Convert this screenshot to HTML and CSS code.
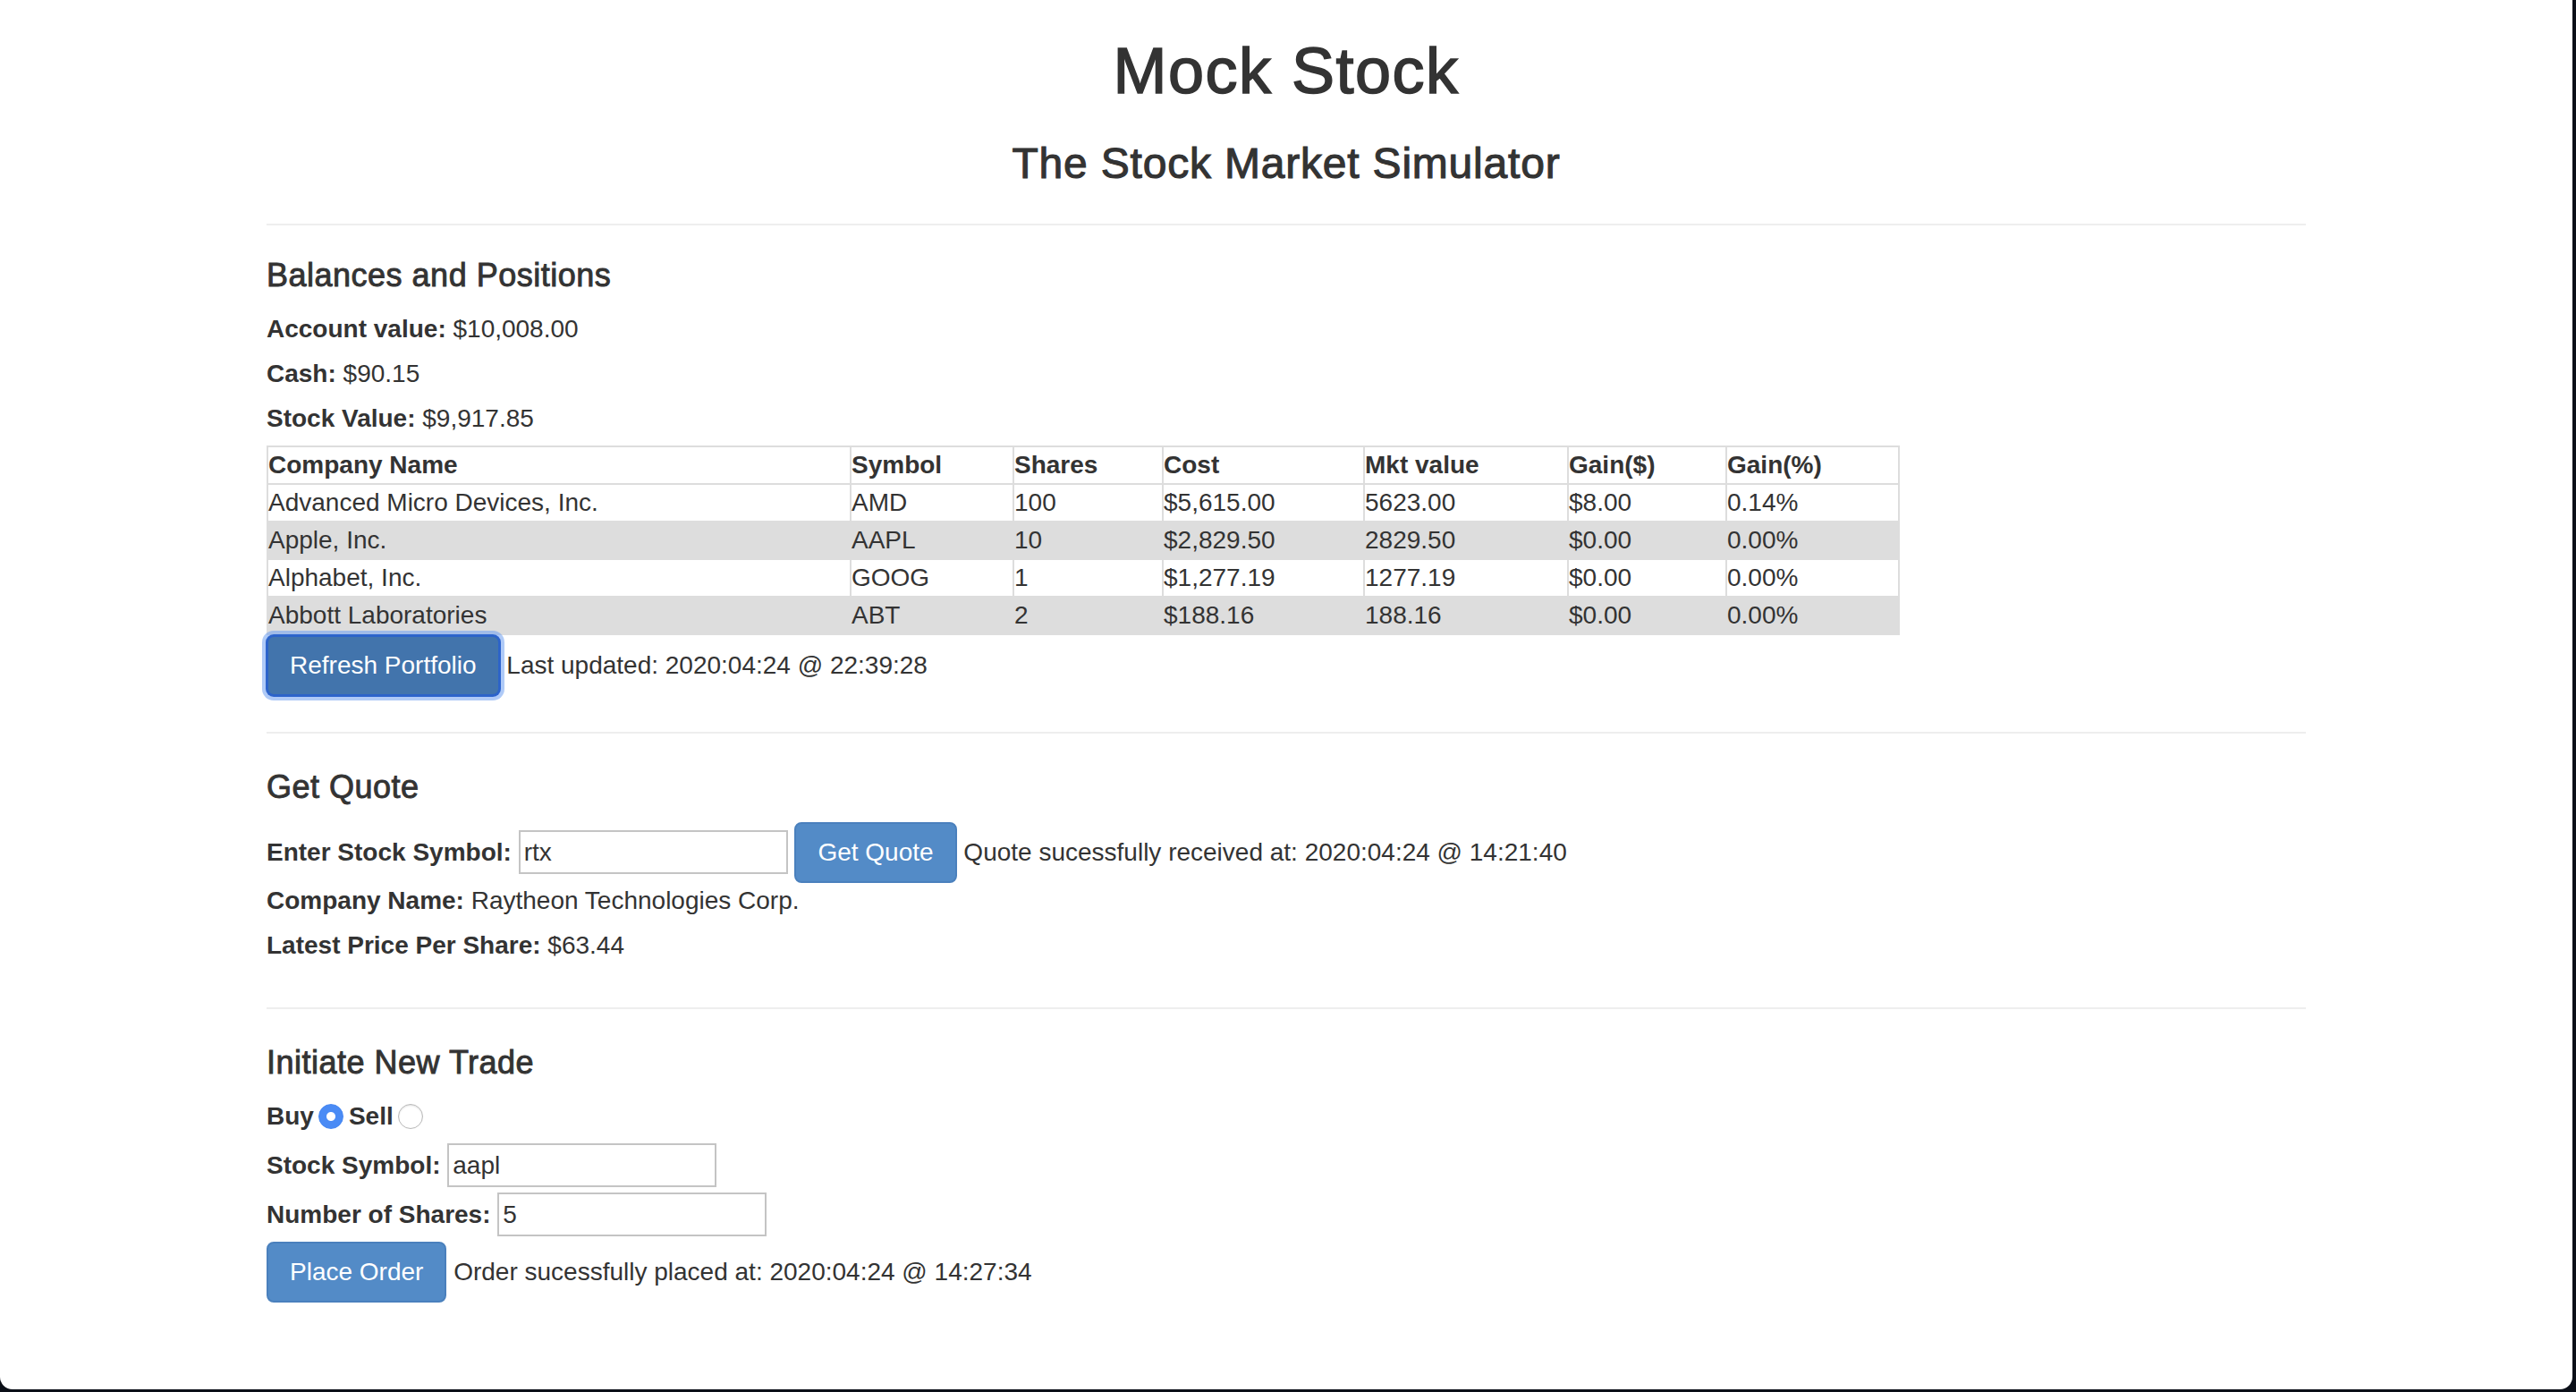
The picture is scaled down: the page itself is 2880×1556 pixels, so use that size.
FILE: index.html
```html
<!DOCTYPE html>
<html lang="en">
<head>
<meta charset="utf-8">
<title>Mock Stock</title>
<link rel="stylesheet" href="styles.css">
</head>
<body>
<div class="window">
  <div class="container">
    <h1 class="title">Mock Stock</h1>
    <h3 class="subtitle">The Stock Market Simulator</h3>
    <hr class="rule rule-top">

    <section class="section">
      <h4 class="section-title">Balances and Positions</h4>
      <div class="field"><label class="label">Account value:</label> $10,008.00</div>
      <div class="field"><label class="label">Cash:</label> $90.15</div>
      <div class="field"><label class="label">Stock Value:</label> $9,917.85</div>
      <table class="positions">
        <thead>
          <tr>
            <th class="c-name">Company Name</th>
            <th class="c-sym">Symbol</th>
            <th class="c-shares">Shares</th>
            <th class="c-cost">Cost</th>
            <th class="c-mkt">Mkt value</th>
            <th class="c-gain">Gain($)</th>
            <th class="c-pct">Gain(%)</th>
          </tr>
        </thead>
        <tbody>
          <tr><td>Advanced Micro Devices, Inc.</td><td>AMD</td><td>100</td><td>$5,615.00</td><td>5623.00</td><td>$8.00</td><td>0.14%</td></tr>
          <tr><td>Apple, Inc.</td><td>AAPL</td><td>10</td><td>$2,829.50</td><td>2829.50</td><td>$0.00</td><td>0.00%</td></tr>
          <tr><td>Alphabet, Inc.</td><td>GOOG</td><td>1</td><td>$1,277.19</td><td>1277.19</td><td>$0.00</td><td>0.00%</td></tr>
          <tr><td>Abbott Laboratories</td><td>ABT</td><td>2</td><td>$188.16</td><td>188.16</td><td>$0.00</td><td>0.00%</td></tr>
        </tbody>
      </table>
      <div class="action-line"><button class="btn btn-focused" type="button">Refresh Portfolio</button> Last updated: 2020:04:24 @ 22:39:28</div>
    </section>

    <hr class="rule">

    <section class="section">
      <h4 class="section-title">Get Quote</h4>
      <div class="action-line"><label class="label">Enter Stock Symbol:</label> <input class="text-input" type="text" value="rtx"> <button class="btn" type="button">Get Quote</button> Quote sucessfully received at: 2020:04:24 @ 14:21:40</div>
      <div class="field"><label class="label">Company Name:</label> Raytheon Technologies Corp.</div>
      <div class="field"><label class="label">Latest Price Per Share:</label> $63.44</div>
    </section>

    <hr class="rule rule-last">

    <section class="section">
      <h4 class="section-title">Initiate New Trade</h4>
      <div class="field"><label class="label">Buy</label><input class="radio" type="radio" name="side" checked><label class="label">Sell</label><input class="radio" type="radio" name="side"></div>
      <div class="field"><label class="label">Stock Symbol:</label> <input class="text-input" type="text" value="aapl"></div>
      <div class="field"><label class="label">Number of Shares:</label> <input class="text-input" type="text" value="5"></div>
      <div class="action-line"><button class="btn" type="button">Place Order</button> Order sucessfully placed at: 2020:04:24 @ 14:27:34</div>
    </section>
  </div>
</div>
</body>
</html>
```

FILE: styles.css
```css
* {
  box-sizing: border-box;
}

html {
  background: #0b0f18;
}

body {
  margin: 0;
  font-family: "Liberation Sans", Arial, Helvetica, sans-serif;
  font-size: 28px;
  line-height: 40px;
  color: #333333;
}

.window {
  width: 2876px;
  height: 1553px;
  background: #ffffff;
  border-radius: 0 0 14px 14px;
  overflow: hidden;
}

.container {
  width: 2340px;
  margin: 0 auto;
  padding: 0 30px;
}

.title {
  margin: 40px 0 20px;
  font-size: 72px;
  line-height: 1.1;
  font-weight: 500;
  text-align: center;
  letter-spacing: 1.5px;
  -webkit-text-stroke: 1.6px #333333;
}

.subtitle {
  margin: 38px 0 20px;
  font-size: 48px;
  line-height: 1.1;
  font-weight: 500;
  text-align: center;
  letter-spacing: 0.8px;
  -webkit-text-stroke: 1.1px #333333;
}

.rule {
  height: 0;
  margin: 40px 0 40px;
  border: 0;
  border-top: 2px solid #eeeeee;
}

.rule-top {
  margin-bottom: 36px;
}

.rule-last {
  margin-top: 39px;
}

.section-title {
  margin: 0 0 20px;
  font-size: 36px;
  line-height: 1.1;
  font-weight: 500;
  letter-spacing: 0.5px;
  -webkit-text-stroke: 0.9px #333333;
}

.label {
  display: inline-block;
  margin-bottom: 10px;
  font-weight: 700;
}

.positions {
  width: 1824px;
  border-collapse: collapse;
  border-spacing: 0;
  table-layout: fixed;
  border: 2px solid #dddddd;
}

.positions th,
.positions td {
  padding: 0;
  border: 2px solid #dddddd;
  text-align: left;
  line-height: 40px;
  white-space: nowrap;
}

.positions th {
  font-weight: 700;
}

.positions tbody tr:nth-child(even) {
  background: #dddddd;
}

.c-name { width: 652px; }
.c-sym { width: 182px; }
.c-shares { width: 167px; }
.c-cost { width: 225px; }
.c-mkt { width: 228px; }
.c-gain { width: 177px; }
.c-pct { width: 193px; }

.btn {
  display: inline-block;
  margin: 0;
  padding: 12px 24px;
  font-family: inherit;
  font-size: 28px;
  line-height: 40px;
  font-weight: 400;
  color: #ffffff;
  background: #538bc7;
  border: 2px solid #4a80bd;
  border-radius: 8px;
  vertical-align: baseline;
  cursor: pointer;
}

.btn-focused {
  background: #4274ac;
  border-color: #2c63c9;
  box-shadow: 0 0 0 1px #2f66cf, 0 0 0 5px rgba(110, 158, 240, 0.55);
}

.text-input {
  width: 301px;
  height: 49px;
  margin: 0;
  padding: 3px 4px 2px;
  font-family: inherit;
  font-size: 28px;
  line-height: 40px;
  color: #333333;
  background: #ffffff;
  border: 2px solid #c4c4c4;
  border-radius: 0;
}

.radio {
  -webkit-appearance: none;
  appearance: none;
  display: inline-block;
  width: 28px;
  height: 28px;
  margin: 0 6px 0 5px;
  vertical-align: middle;
  position: relative;
  top: -1px;
  border-radius: 50%;
  border: 1.5px solid #b9b9b9;
  background: #ffffff;
  box-shadow: inset 0 1px 2px rgba(0, 0, 0, 0.12);
}

.radio:checked {
  border-color: #4687f2;
  background: radial-gradient(circle, #ffffff 0, #ffffff 4.5px, #4a8bf5 5.5px);
  box-shadow: none;
}
```
